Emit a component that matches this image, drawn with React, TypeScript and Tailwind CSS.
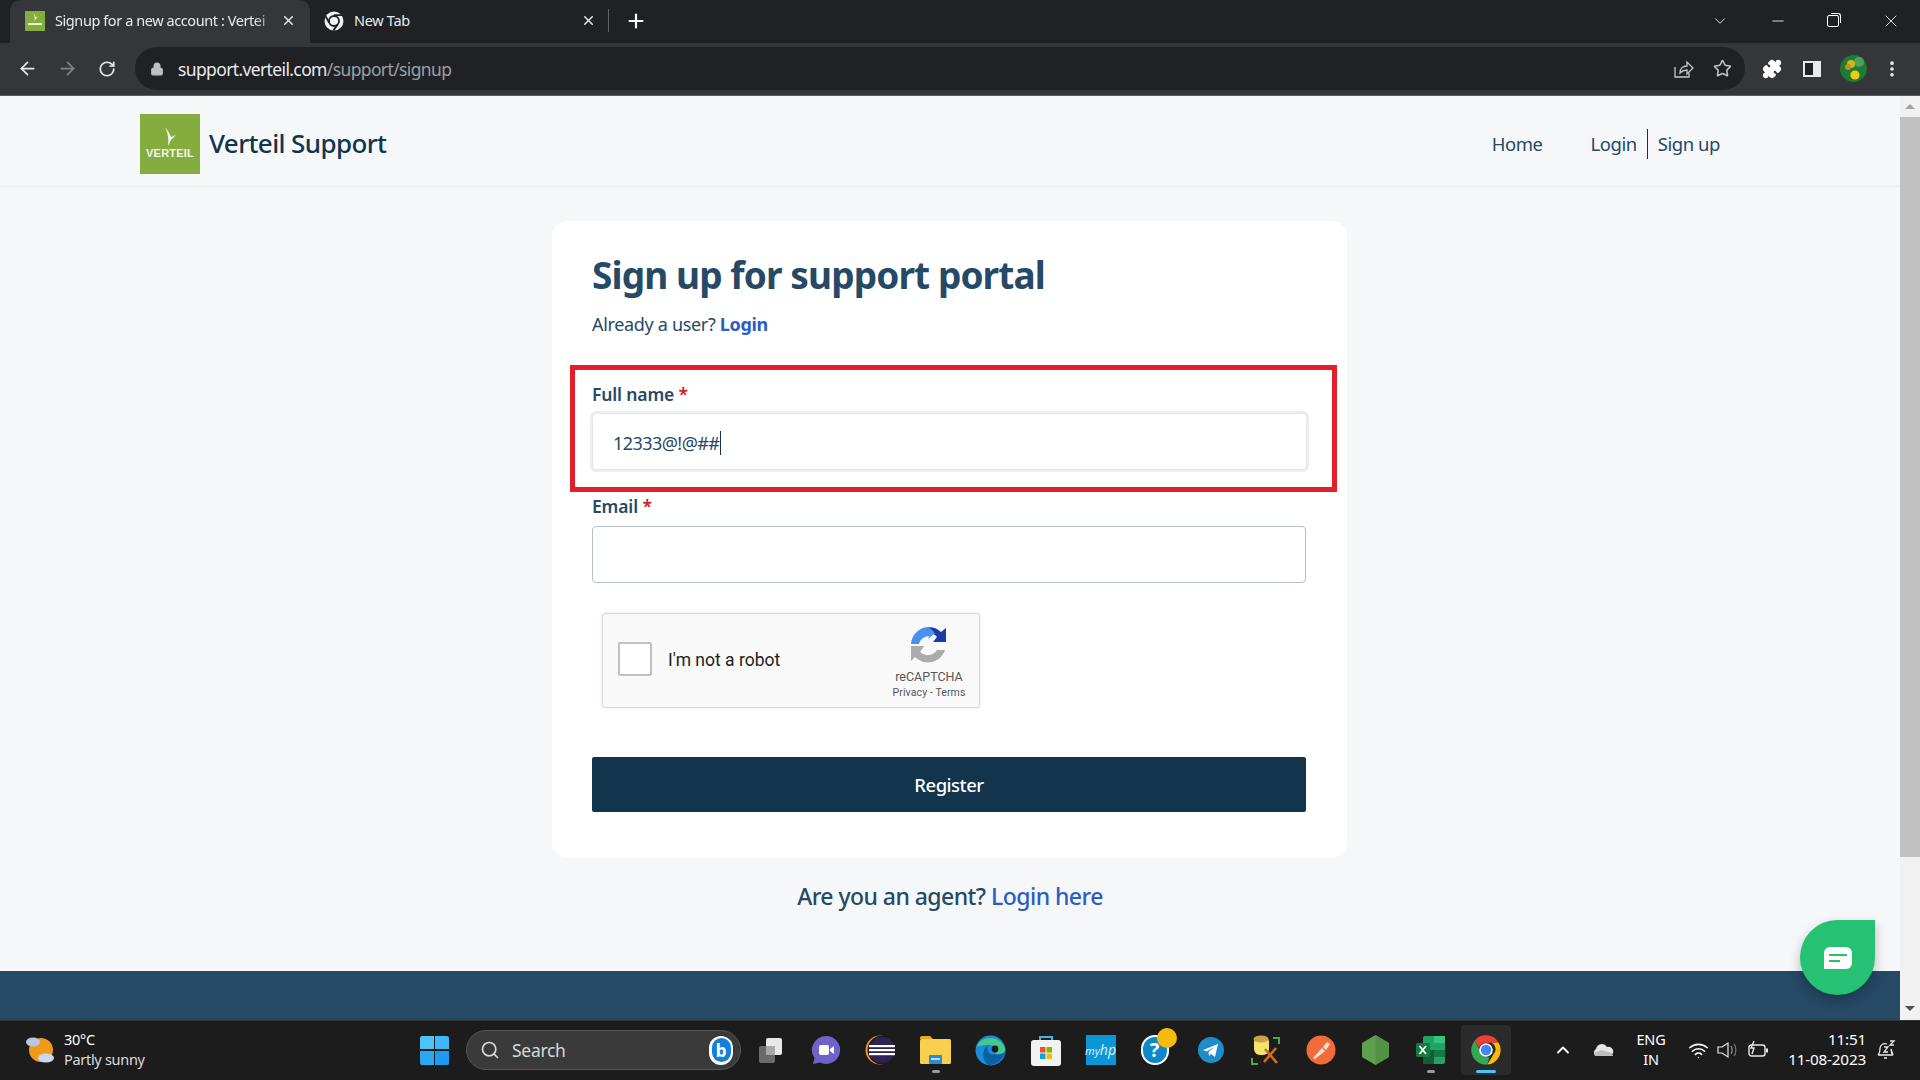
import { ArrowLeft, ArrowRight, RotateCw, Lock, Star, X, Plus, ChevronDown, Minus, ChevronUp, EllipsisVertical, Search, Puzzle, Wifi } from "lucide-react"

const pageFont = { fontFamily: '"Noto Sans", sans-serif' }

function ChromeLogo({ size }: { size: number }) {
  return (
    <svg width={size} height={size} viewBox="0 0 48 48">
      <path d="M24 2a22 22 0 0 1 19.05 11H24a11 11 0 0 0-10.4 7.4L6.9 10A22 22 0 0 1 24 2z" fill="#ea4335" />
      <path d="M43.05 13A22 22 0 0 1 26 45.9L35.5 30a11 11 0 0 0-2.9-17z" fill="#fbbc04" />
      <path d="M6.9 10l9.6 16.6A11 11 0 0 0 29 34.7l-3 11.2A22 22 0 0 1 6.9 10z" fill="#34a853" />
      <circle cx="24" cy="24" r="9" fill="#4285f4" stroke="#fff" strokeWidth="2.5" />
    </svg>
  )
}

function TabIconMono() {
  return (
    <svg width="20" height="20" viewBox="0 0 20 20">
      <circle cx="10" cy="10" r="9.5" fill="#f1f3f4" />
      <circle cx="10" cy="10" r="5" fill="#f1f3f4" stroke="#202124" strokeWidth="1.8" />
      <path d="M10 4.2h8.2M5 11.6L1.6 5.2M13.6 13.6L9.4 19.4" stroke="#202124" strokeWidth="1.8" />
    </svg>
  )
}

function VerteilMark({ className }: { className: string }) {
  return (
    <svg className={className} viewBox="0 0 20 20" fill="#f3f7ea">
      <path d="M5 0c3 4 5 7 6 10l5-2-5 5-3 6c1-7 0-13-3-19z" />
    </svg>
  )
}

function RecaptchaLogo() {
  return (
    <svg width="40" height="40" viewBox="0 0 40 40" fill="none">
      <path d="M20 2a18 18 0 0 1 12 5l5-4v14H24l4-5a11 11 0 0 0-8-4z" fill="#1c3aa9" />
      <path d="M20 2A18 18 0 0 0 2 19h8a11 11 0 0 1 10-8l-1 3 7-6-6-6z" fill="#4a90f0" />
      <path d="M2 21v15l4-4a18 18 0 0 0 30-7h-8a11 11 0 0 1-17 2l4-6z" fill="#ababab" />
    </svg>
  )
}

const taskIcons = [
  <svg key="view" width="24" height="27" viewBox="0 0 24 27">
    <rect x="0" y="9" width="16" height="17" rx="2" fill="#6b6b6b" />
    <rect x="7" y="1" width="16" height="17" rx="2" fill="#e8e8e8" />
    <rect x="7" y="9" width="9" height="9" fill="#a8a8a8" />
  </svg>,
  <svg key="meet" width="30" height="30" viewBox="0 0 30 30">
    <path d="M15 1a14 14 0 1 1-6 26.6L2 29l1.5-6A14 14 0 0 1 15 1z" fill="#6f63c9" />
    <rect x="8" y="10" width="10" height="10" rx="2" fill="#fff" />
    <path d="M19 14l4-3v8l-4-3z" fill="#fff" />
  </svg>,
  <svg key="eclipse" width="32" height="30" viewBox="0 0 32 30">
    <circle cx="15" cy="15" r="14.5" fill="#f7941e" />
    <circle cx="17" cy="15" r="14.5" fill="#1c1c1c" />
    <circle cx="17" cy="15" r="13" fill="#2c2255" />
    <rect x="4" y="10" width="26" height="2.2" fill="#fff" />
    <rect x="4" y="14" width="26" height="2.2" fill="#fff" />
    <rect x="4" y="18" width="26" height="2.2" fill="#fff" />
  </svg>,
  <svg key="files" width="31" height="28" viewBox="0 0 31 28">
    <path d="M0 2a2 2 0 0 1 2-2h8l3 3h-13z" fill="#e9a91f" />
    <rect x="0" y="3" width="31" height="25" rx="1.5" fill="#f8cf4f" />
    <rect x="9" y="19" width="13" height="9" rx="1" fill="#2a8ad4" />
    <rect x="11" y="22" width="9" height="2" fill="#b5e0fa" />
  </svg>,
  <svg key="edge" width="31" height="31" viewBox="0 0 31 31">
    <circle cx="15.5" cy="15.5" r="15" fill="#1b8ed6" />
    <path d="M2 11C6 1 24 -1 30 13c1 6-6 8-10 6 3-3 2-8-4-9C9 9 3 12 2 11z" fill="#46c98f" />
    <path d="M20 19c3 1 7 0 10-2-2 8-9 13-16 13 -8-4-7-16-1-20-2 5 1 11 7 9z" fill="#0b5fa5" />
    <circle cx="20" cy="14" r="3.4" fill="#1c1c1c" />
  </svg>,
  <svg key="store" width="30" height="31" viewBox="0 0 30 31">
    <path d="M9 6V2h12v4" fill="none" stroke="#3bb4f2" strokeWidth="2" />
    <rect x="0" y="5" width="30" height="26" rx="3" fill="#f2f2f2" />
    <rect x="9" y="12" width="5.5" height="5.5" fill="#f25022" />
    <rect x="15.5" y="12" width="5.5" height="5.5" fill="#7fba00" />
    <rect x="9" y="18.5" width="5.5" height="5.5" fill="#00a4ef" />
    <rect x="15.5" y="18.5" width="5.5" height="5.5" fill="#ffb900" />
  </svg>,
  <div key="myhp" className="flex h-[30px] w-[30px] items-center justify-center bg-[#0d96d6] text-[11px] italic leading-none text-[#d5eefa]" style={pageFont}>
    my<span className="text-[14px]">hp</span>
  </div>,
  <div key="help" className="relative h-[30px] w-[30px]">
    <div className="flex h-[30px] w-[28px] items-center justify-center rounded-full border-2 border-white bg-[#0f88c9] text-[20px] font-bold text-white" style={pageFont}>?</div>
    <div className="absolute left-[16px] top-[-7px] h-[20px] w-[20px] rounded-full bg-[#f6bb0e]" />
  </div>,
  <svg key="tg" width="26" height="26" viewBox="0 0 26 26">
    <circle cx="13" cy="13" r="13" fill="#1f8ccb" />
    <path d="M5 13l15-6-3 13-4-3-2 2-.5-4 6-5-8 4.5z" fill="#fff" />
  </svg>,
  <svg key="tools" width="30" height="30" viewBox="0 0 30 30">
    <path d="M22 3h6v6M1 23v6h6" fill="none" stroke="#4ca64c" strokeWidth="2" />
    <rect x="3" y="1" width="15" height="19" rx="6" fill="#f3e36b" />
    <ellipse cx="10" cy="4" rx="7.5" ry="3.5" fill="#c9a24a" />
    <path d="M13 27l12-14M14 14l12 14" stroke="#d8691f" strokeWidth="2.6" />
  </svg>,
  <svg key="postman" width="30" height="30" viewBox="0 0 30 30">
    <circle cx="15" cy="15" r="14.5" fill="#f26b3a" />
    <path d="M7 23l9-10 3 3-10 8zM17 12l4-5 3 2-4 6z" fill="#fbe3d8" />
  </svg>,
  <svg key="node" width="27" height="30" viewBox="0 0 27 30">
    <path d="M13.5 0L27 8v14l-13.5 8L0 22V8z" fill="#5fa04e" />
    <path d="M13.5 0L27 8v14l-13.5 8z" fill="#4d8c3f" opacity="0.7" />
  </svg>,
  <svg key="excel" width="29" height="28" viewBox="0 0 29 28">
    <rect x="7" y="0" width="22" height="28" rx="2" fill="#21a366" />
    <rect x="18" y="0" width="11" height="7" fill="#33c481" />
    <rect x="7" y="14" width="11" height="14" fill="#185c37" />
    <rect x="18" y="14" width="11" height="7" fill="#107c41" />
    <rect x="0" y="7" width="14" height="14" rx="1.5" fill="#107c41" />
    <path d="M3.5 10l6.5 8M10 10l-6.5 8" stroke="#fff" strokeWidth="1.8" />
  </svg>,
]

function Field({ label, children }: { label: string; children: React.ReactNode }) {
  return (
    <div>
      <div className="h-[26px] text-[17.5px] font-semibold leading-[26px] tracking-[-0.15px] text-[#264966]">
        {label} <span className="text-[#c82124]">*</span>
      </div>
      {children}
    </div>
  )
}

export default function App() {
  return (
    <div className="flex h-screen w-full flex-col overflow-hidden bg-[#f5f7f9]" style={pageFont}>
      {/* browser tabs */}
      <div className="flex h-[43px] shrink-0 items-stretch bg-[#202124] pb-[2px] pl-[10px] text-[14.5px] text-[#e8eaed]">
        <div className="mb-[-2px] flex w-[300px] items-center rounded-t-[10px] bg-[#35363a] pb-[2px] pl-[15px]">
          <div className="flex h-[20px] w-[20px] flex-col items-center justify-center bg-[#84ac3f]">
            <VerteilMark className="h-[9px] w-[9px]" />
            <div className="mb-[3px] mt-[1px] h-[2px] w-[14px] bg-[#e9f1d8]" />
          </div>
          <span className="ml-[10px] w-[226px] whitespace-nowrap tracking-[-0.42px] [mask-image:linear-gradient(to_right,black_88%,transparent)]">Signup for a new account : Vertei</span>
          <X size={15} strokeWidth={2.4} />
        </div>
        <div className="flex w-[298px] items-center pl-[14px]">
          <TabIconMono />
          <span className="ml-[10px] tracking-[-0.3px]">New Tab</span>
          <X size={15} strokeWidth={2.4} className="ml-auto mr-[12px]" />
        </div>
        <div className="my-[9px] w-px bg-[#5f6368]" />
        <Plus size={22} strokeWidth={2.4} className="ml-[16px] self-center text-white" />
        <ChevronDown size={18} strokeWidth={1.2} className="ml-[1064px] self-center" />
        <Minus size={18} strokeWidth={1.2} className="ml-[40px] self-center" />
        <div className="relative ml-[40px] h-[12px] w-[12px] self-center rounded-[2px] border border-white">
          <div className="absolute right-[-3px] top-[-3px] h-[10px] w-[10px] rounded-tr-[3px] border-r border-t border-white" />
        </div>
        <X size={20} strokeWidth={1.1} className="ml-[42px] self-center" />
      </div>

      {/* toolbar */}
      <div className="flex h-[53px] shrink-0 items-center border-b border-[#5b5c5f] bg-[#35363a] pb-[1px] pl-[7px] text-[#e8eaed]">
        <div className="flex w-[40px] justify-center"><ArrowLeft size={21} strokeWidth={2} /></div>
        <div className="flex w-[40px] justify-center text-[#808388]"><ArrowRight size={21} strokeWidth={2} /></div>
        <div className="flex w-[40px] justify-center"><RotateCw size={18} strokeWidth={2.2} /></div>
        <div className="ml-[8px] flex h-[43px] w-[1610px] items-center rounded-full bg-[#202124] pl-[15px]">
          <Lock size={14} fill="#bdc1c6" className="text-[#bdc1c6]" />
          <span className="ml-[14px] whitespace-nowrap pt-[2px] text-[17.5px] tracking-[-0.63px]">
            support.verteil.com<span className="text-[#9aa0a6]">/support/signup</span>
          </span>
          <div className="ml-auto flex w-[38px] justify-center text-[#c4c7c9]">
            <svg width="21" height="20" viewBox="0 0 21 20" fill="none" stroke="currentColor" strokeWidth="1.3">
              <path d="M2 8v10h14v-4" />
              <path d="M7 14c0-5 3-7 7-7V3l6 6-6 6v-4c-3 0-5 1-7 3z" />
            </svg>
          </div>
          <div className="mr-[3px] flex w-[40px] justify-center text-[#c4c7c9]"><Star size={19} strokeWidth={1.9} /></div>
        </div>
        <div className="ml-[7px] flex w-[40px] justify-center text-white"><Puzzle size={20} fill="white" /></div>
        <div className="flex w-[40px] justify-center">
          <div className="flex h-[16px] w-[18px] justify-end border-2 border-r-[8px] border-[#e8eaed] bg-[#202124]" />
        </div>
        <div className="ml-[1px] flex w-[40px] justify-center">
          <svg width="27" height="27" viewBox="0 0 27 27">
            <circle cx="13.5" cy="13.5" r="13.5" fill="#1f7a33" />
            <circle cx="19" cy="7" r="5" fill="#4aa356" />
            <circle cx="11" cy="9" r="4" fill="#d7b41d" />
            <circle cx="8" cy="12" r="3" fill="#b9961a" />
            <circle cx="15" cy="20" r="4.6" fill="#e8cc18" />
          </svg>
        </div>
        <EllipsisVertical size={20} strokeWidth={2.4} className="ml-[9px]" />
      </div>

      <div className="flex min-h-0 flex-1">
        {/* page */}
        <div className="relative flex min-w-0 flex-1 flex-col">
          <header className="flex h-[91px] shrink-0 items-center border-b border-[#ebeff3] pl-[140px] pr-[180px] pt-[5px] text-[#12344d]">
            <div className="flex h-[60px] w-[60px] flex-col items-center justify-center bg-[#84ac3f]">
              <VerteilMark className="h-[20px] w-[20px]" />
              <span className="text-[11px] font-bold leading-[13px] tracking-[0.2px] text-[#f3f7ea]" style={{ fontFamily: '"Liberation Sans", sans-serif' }}>VERTEIL</span>
            </div>
            <span className="ml-[9px] text-[26px] font-medium tracking-[-0.62px]">Verteil Support</span>
            <nav className="ml-auto flex items-center text-[18.5px] tracking-[-0.45px] text-[#264966]">
              <span>Home</span>
              <span className="ml-[48px]">Login</span>
              <span className="ml-[10px] h-[30px] w-px bg-[#12344d]" />
              <span className="ml-[10px]">Sign up</span>
            </nav>
          </header>

          <main className="flex flex-1 flex-col items-center bg-[#f5f7f9] pt-[34px]">
            <div className="mr-[1px] h-[637px] w-[795px] rounded-[16px] bg-white px-[40px] pt-[32px]">
              <h1 className="h-[44px] text-[37px] font-bold leading-[44px] tracking-[-0.9px] text-[#264966]">Sign up for support portal</h1>
              <p className="mt-[14px] h-[26px] text-[18px] leading-[26px] tracking-[-0.33px] text-[#264966]">
                Already a user? <span className="font-bold text-[#2c5cc5]">Login</span>
              </p>
              <div className="relative mt-[44px]">
                <div className="absolute left-[-22px] right-[-30px] top-[-16px] h-[127px] border-[5px] border-[#e31f2a]" />
                <Field label="Full name">
                  <div className="mt-[6px] flex h-[57px] w-[715px] items-center rounded-[4px] border border-[#e4e8ee] bg-white pl-[20px] pt-[3px] text-[18px] tracking-[-0.55px] text-[#264966] shadow-[0_0_0_2px_#ebeff3]">
                    12333@!@##<span className="ml-[1px] h-[24px] w-px bg-[#12344d]" />
                  </div>
                </Field>
              </div>
              <div className="mt-[23px]">
                <Field label="Email">
                  <div className="mt-[7px] h-[57px] w-[714px] rounded-[4px] border border-[#b5bfc9] bg-white" />
                </Field>
              </div>
              <div className="ml-[10px] mt-[30px] flex h-[95px] w-[378px] items-center rounded-[3px] border border-[#d6d6d6] bg-[#f9f9f9] pl-[15px] shadow-[0_0_4px_rgba(0,0,0,0.08)]" style={{ fontFamily: "Roboto, sans-serif" }}>
                <div className="mb-[4px] h-[34px] w-[34px] rounded-[2px] border-2 border-[#c1c1c1] bg-white" />
                <span className="ml-[16px] text-[17.5px] text-[#222]">I'm not a robot</span>
                <div className="ml-auto mr-[5px] flex w-[90px] flex-col items-center pt-[2px] text-[#555]">
                  <RecaptchaLogo />
                  <span className="mt-[5px] text-[12.5px] leading-[14px]">reCAPTCHA</span>
                  <span className="mt-[3px] whitespace-nowrap text-[10.5px] leading-[12px] tracking-[0.1px]">Privacy - Terms</span>
                </div>
              </div>
              <div className="mt-[49px] flex h-[55px] w-[714px] items-center justify-center rounded-[2px] bg-[#12344d] text-[18.5px] font-medium tracking-[-0.5px] text-white">Register</div>
            </div>
            <p className="mt-[21px] h-[34px] text-[23px] font-medium leading-[34px] tracking-[-0.55px] text-[#264966]">
              Are you an agent? <span className="text-[#2c5cc5]">Login here</span>
            </p>
            <div className="mt-auto h-[49px] w-full bg-[#264966]" />
          </main>

          {/* chat widget */}
          <div className="absolute left-[1800px] top-[824px] flex h-[75px] w-[75px] items-center justify-center rounded-full rounded-tr-[10px] bg-[#27c173] shadow-[0_5px_12px_rgba(0,0,0,0.25)]">
            <div className="flex h-[22px] w-[28px] flex-col justify-center gap-[4px] rounded-[6px] rounded-bl-none bg-white pl-[5px]">
              <div className="h-[2px] w-[18px] bg-[#27c173]" />
              <div className="h-[2px] w-[11px] bg-[#27c173]" />
            </div>
          </div>
        </div>

        {/* scrollbar */}
        <div className="flex w-[20px] shrink-0 flex-col items-center bg-[#f1f1f1]">
          <div className="flex h-[21px] w-full items-center justify-center">
            <div className="h-0 w-0 border-x-[5px] border-b-[5px] border-x-transparent border-b-[#a3a3a3]" />
          </div>
          <div className="h-[740px] w-full bg-[#c1c1c1]" />
          <div className="mt-auto flex h-[24px] w-full items-center justify-center">
            <div className="h-0 w-0 border-x-[5px] border-t-[5px] border-x-transparent border-t-[#505050]" />
          </div>
        </div>
      </div>

      {/* windows taskbar */}
      <div className="flex h-[60px] shrink-0 items-center border-t border-[#333] bg-[#1c1c1c] pb-[1px] text-white">
        <div className="flex w-[420px] items-center pl-[25px]">
          <svg width="30" height="30" viewBox="0 0 30 30">
            <circle cx="16" cy="15" r="12" fill="#f09a1a" />
            <ellipse cx="8" cy="7" rx="7" ry="4.5" fill="#b5c9e6" />
            <ellipse cx="21" cy="23" rx="8" ry="4.5" fill="#c9d8ee" />
          </svg>
          <div className="mb-[2px] ml-[9px] text-[14.5px] leading-[20px] tracking-[-0.3px]">
            <div>30°C</div>
            <div className="text-[#dcdcdc]">Partly sunny</div>
          </div>
        </div>
        <div className="grid h-[29px] w-[29px] grid-cols-2 gap-[1.5px]">
          <div className="rounded-tl-[2px] bg-[#4fc3f7]" />
          <div className="rounded-tr-[2px] bg-[#40b8f5]" />
          <div className="rounded-bl-[2px] bg-[#2aa8f2]" />
          <div className="rounded-br-[2px] bg-[#1e9bf0]" />
        </div>
        <div className="ml-[17px] flex h-[40px] w-[275px] items-center rounded-full border border-[#555] bg-[#3a3a3a] pl-[13px] pr-[7px] text-[17.5px] text-[#d8d8d8]">
          <Search size={20} strokeWidth={2} />
          <span className="ml-[12px] tracking-[-0.3px]">Search</span>
          <div className="ml-auto flex h-[29px] w-[24px] items-center justify-center rounded-full bg-white">
            <div className="flex h-[24px] w-[19px] items-center justify-center rounded-full bg-[#1481d8] text-[17px] font-bold leading-none text-white">b</div>
          </div>
        </div>
        <div className="ml-[2px] flex">
          {taskIcons.map((icon, i) => (
            <div key={i} className="relative flex h-[50px] w-[55px] items-center justify-center">
              {icon}
              {(i === 3 || i === 12) && <div className="absolute bottom-[2px] h-[3px] w-[8px] rounded-full bg-[#9a9a9a]" />}
            </div>
          ))}
          <div className="relative ml-[3px] flex h-[50px] w-[50px] items-center justify-center rounded-[4px] bg-[#2b2b2b]">
            <ChromeLogo size={32} />
            <div className="absolute bottom-[2px] h-[3px] w-[20px] rounded-full bg-[#4cc2ff]" />
          </div>
        </div>
        <div className="ml-auto flex items-center pr-[20px]">
          <div className="flex w-[40px] justify-center"><ChevronUp size={20} strokeWidth={2.2} /></div>
          <div className="flex w-[40px] justify-center">
            <svg width="22" height="14" viewBox="0 0 22 14">
              <path d="M4 13a4 4 0 0 1 0-7 6 6 0 0 1 11-2 4.5 4.5 0 0 1 3 9z" fill="#e6e6e6" />
              <path d="M2 10l7-3 11 3 1 3H3z" fill="#bdbdbd" />
            </svg>
          </div>
          <div className="mb-[2px] w-[56px] text-center text-[14.5px] leading-[20px] tracking-[-0.2px]">ENG<br />IN</div>
          <div className="ml-[2px] flex w-[34px] justify-center"><Wifi size={21} strokeWidth={1.8} /></div>
          <div className="flex w-[26px] justify-center">
            <svg width="22" height="18" viewBox="0 0 22 18" fill="none" stroke="#e8e8e8" strokeWidth="1.2">
              <path d="M1 6h4l6-4v14l-6-4H1z" />
              <path d="M14 5c1.5 2 1.5 6 0 8" stroke="#999" />
              <path d="M17 3c2.5 3 2.5 9 0 12" stroke="#777" />
            </svg>
          </div>
          <div className="flex w-[34px] justify-center">
            <svg width="21" height="18" viewBox="0 0 21 18" fill="none" stroke="#e8e8e8" strokeWidth="1.4">
              <rect x="1" y="4" width="16" height="11" rx="2.5" />
              <rect x="18" y="7.5" width="2" height="4" fill="#e8e8e8" stroke="none" />
              <path d="M6 0L3 7h3l-2 6" />
            </svg>
          </div>
          <div className="mb-[2px] w-[91px] whitespace-nowrap text-right text-[15.3px] leading-[20px] tracking-[-0.2px]">11:51<br />11-08-2023</div>
          <div className="ml-[6px] flex w-[28px] justify-center">
            <svg width="20" height="20" viewBox="0 0 20 20" fill="none" stroke="#e8e8e8" strokeWidth="1.3">
              <path d="M2 15c2-2 2-4 2-7a5 5 0 0 1 7-4M15 9c0 3 0 4 2 6zM2 15h15M8 18h3" />
              <path d="M8 7h4l-4 5h4M14 1h4l-4 4h4" />
            </svg>
          </div>
        </div>
      </div>
    </div>
  )
}
